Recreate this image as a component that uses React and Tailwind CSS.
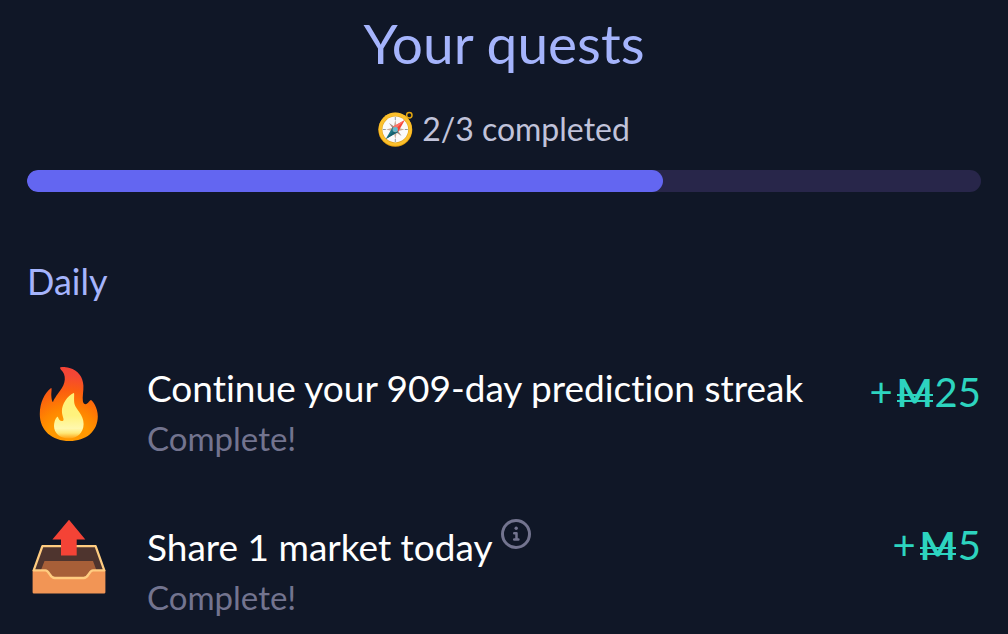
function CompassIcon() {
  return (
    <svg viewBox="0 0 36 36" className="size-9 shrink-0" aria-hidden="true">
      <circle cx="31.3" cy="4.3" r="2.7" fill="none" stroke="#e2a610" strokeWidth="1.5" />
      <circle cx="17.3" cy="18.8" r="17" fill="#e8a00c" />
      <circle cx="17.3" cy="18.2" r="16.6" fill="#fbc02d" />
      <circle cx="17.3" cy="18.5" r="13.4" fill="#e0a11b" />
      <circle cx="17.3" cy="18.5" r="12.9" fill="#fafafa" />
      <path d="M17.3 6v3M17.3 28v3M4.8 18.5h3M26.8 18.5h3" stroke="#8d9aa2" strokeWidth="1" />
      <path d="M17.3 8.8l1.6 7.8 7.6 1.9-7.6 1.9-1.6 7.8-1.6-7.8-7.6-1.9 7.6-1.9z" fill="#c9ab99" />
      <path d="M11 12l6.8 4.6 5.8 8.4-6.8-4.6z" fill="#a58d80" />
      <path d="M26.8 9l-6.6 11.8-2.9-2.3-2.4-2.8z" fill="#f44336" />
      <path d="M26.8 9l-9.5 9.5-2.4-2.8z" fill="#ff7267" />
      <path d="M7.8 28l6.9-12 2.8 2.2 2.5 2.8z" fill="#1c7482" />
      <path d="M7.8 28l9.6-9.4 2.6 2.4z" fill="#16606e" />
      <circle cx="17.3" cy="18.5" r="2.7" fill="#82aeb8" />
      <circle cx="17.3" cy="18.5" r="1.5" fill="#4fc3dc" />
    </svg>
  );
}

function FireIcon() {
  return (
    <svg viewBox="0 0 76 76" className="size-19 shrink-0" aria-hidden="true">
      <defs>
        <radialGradient id="flame" gradientUnits="userSpaceOnUse" cx="30" cy="76" r="74">
          <stop offset="0.3" stopColor="#ff9800" />
          <stop offset="0.45" stopColor="#ff8500" />
          <stop offset="0.7" stopColor="#fb5d10" />
          <stop offset="0.9" stopColor="#f44735" />
          <stop offset="1" stopColor="#f44336" />
        </radialGradient>
        <linearGradient id="core" x1="0" y1="0" x2="0" y2="1">
          <stop offset="0" stopColor="#fff176" />
          <stop offset="0.5" stopColor="#fff27d" />
          <stop offset="0.78" stopColor="#fff8ae" />
          <stop offset="0.88" stopColor="#ffe978" />
          <stop offset="1" stopColor="#ffa315" />
        </linearGradient>
      </defs>
      <path
        d="M22.2 1.6C22.6 .8 27 .8 31.500 2C40 4.200 45 11 45.400 19.500C45.700 25 44.200 31 44.900 35.200C45.300 38 47.300 38.600 48.800 37.800C50.700 36.900 51.800 33.900 53 34C54.300 34.100 60 42 59.800 50.500C59.600 65.500 48 75 31.500 75C14 75 1.700 64.500 1.800 48C1.900 36.500 6.500 27 12.800 22.200C14.300 21.100 13.200 26 13.300 29.500C13.400 33.200 14.300 36 15 36.200C15.500 34 18.500 29.500 22 24.800C27.800 17.500 28.800 8.700 22.800 3.400C22.200 2.800 22 2.200 22.200 1.600Z"
        transform="translate(7 0)"
        fill="url(#flame)"
      />
      <path
        d="M42.700 26.900C43.800 26.500 42.500 33 43.500 38C44.700 43.500 52.800 48.500 52.600 58C52.500 67 46 72.500 37.800 72.500C29 72.500 23 67 23 60C23 56.500 24 53 26 51C27.100 50 27.300 52.700 28.500 54C29.500 55.200 31.500 55.400 32.300 54.500C33.400 53.200 31 50.300 30.900 45C30.800 38 36.500 29.700 42.700 26.900Z"
        fill="url(#core)"
      />
    </svg>
  );
}

function OutboxIcon() {
  return (
    <svg viewBox="0 0 76 76" className="size-19 shrink-0" aria-hidden="true">
      <path d="M12 27h52l8 24v6H4v-6z" fill="#4e342e" />
      <path d="M13.500 42h48.500l3.500 9.500L54 61H22L10 51z" fill="#a75f38" />
      <path d="M1.600 51H14c4 0 3.500 8 9 8h30c5.500 0 5-8 9-8h12.400v22.300a1.300 1.300 0 0 1-1.300 1.300H2.900a1.300 1.300 0 0 1-1.300-1.300z" fill="#f29555" />
      <path
        d="M11.400 27.200h53.200l8.700 24.200H62c-4.200 0-4 7.600-9.400 7.600H23.800c-5.400 0-5.200-7.600-9.400-7.600H2.700z"
        fill="none"
        stroke="#ffcc80"
        strokeWidth="2.300"
        strokeLinejoin="round"
      />
      <path d="M38 .8l16.300 19.800h-8.600v16H30v-16h-8.600z" fill="#f44336" />
    </svg>
  );
}

function InfoIcon() {
  return (
    <svg viewBox="0 0 30 30" className="size-[30px]" fill="none" stroke="#73748f" aria-hidden="true">
      <circle cx="15" cy="15" r="13.500" strokeWidth="3" />
      <circle cx="15.200" cy="9.300" r="1.700" fill="#73748f" stroke="none" />
      <path d="M13.200 14.200h2.300v5.900M13.200 20.500h4.200" strokeWidth="2.500" strokeLinecap="round" strokeLinejoin="round" />
    </svg>
  );
}

function Reward({ amount }) {
  return (
    <div className="mt-1 flex shrink-0 items-baseline text-[40px] leading-12 text-[#2dd4bf]">
      <span>+</span>
      <span className="relative ml-1 flex w-9 justify-center text-[38px] leading-12 font-bold before:absolute before:inset-x-0 before:top-[26px] before:h-0.5 before:bg-[#2dd4bf] after:absolute after:inset-x-0 after:top-8 after:h-0.5 after:bg-[#2dd4bf]">
        M
      </span>
      <span className="ml-0.5">{amount}</span>
    </div>
  );
}

function Quest({ icon, title, status, amount, info }) {
  return (
    <li className="flex items-start">
      <div className="mt-0.5 shrink-0">{icon}</div>
      <div className="ml-10 min-w-0 flex-1">
        <div className="flex items-start gap-2">
          <h3 className={info ? "pt-1.5 text-[37px] leading-12 text-white" : "text-[37px] leading-12 text-white"}>{title}</h3>
          {info && (
            <button type="button" aria-label="More information" className="mt-0.5">
              <InfoIcon />
            </button>
          )}
        </div>
        <p className="mt-0.5 text-[33px] leading-12 text-[#73748f]">{status}</p>
      </div>
      <Reward amount={amount} />
    </li>
  );
}

export default function App() {
  return (
    <main className="min-h-screen bg-[#101727] px-[27px] pt-[7px] font-['Lato',sans-serif] [font-variant-ligatures:none]">
      <h1 className="text-center text-[55px] leading-18 text-[#a5b4fc]">Your quests</h1>
      <div className="mt-[26px] flex items-center justify-center gap-2">
        <CompassIcon />
        <p id="progress" className="text-[32px] leading-12 text-[#c1c3da]">2/3 completed</p>
      </div>
      <div
        role="progressbar"
        aria-labelledby="progress"
        aria-valuemin={0}
        aria-valuemax={3}
        aria-valuenow={2}
        className="mt-[17px] h-[22px] overflow-hidden rounded-full bg-[#28264a]"
      >
        <div className="h-full w-2/3 rounded-full bg-[#6366f1]" />
      </div>
      <section className="mt-16">
        <h2 className="text-4xl leading-[50px] text-[#a5b4fc]">Daily</h2>
        <ul className="mt-[58px] flex flex-col gap-[55px] pl-1">
          <Quest icon={<FireIcon />} title="Continue your 909-day prediction streak" status="Complete!" amount={25} />
          <Quest icon={<OutboxIcon />} title="Share 1 market today" status="Complete!" amount={5} info />
        </ul>
      </section>
    </main>
  );
}
